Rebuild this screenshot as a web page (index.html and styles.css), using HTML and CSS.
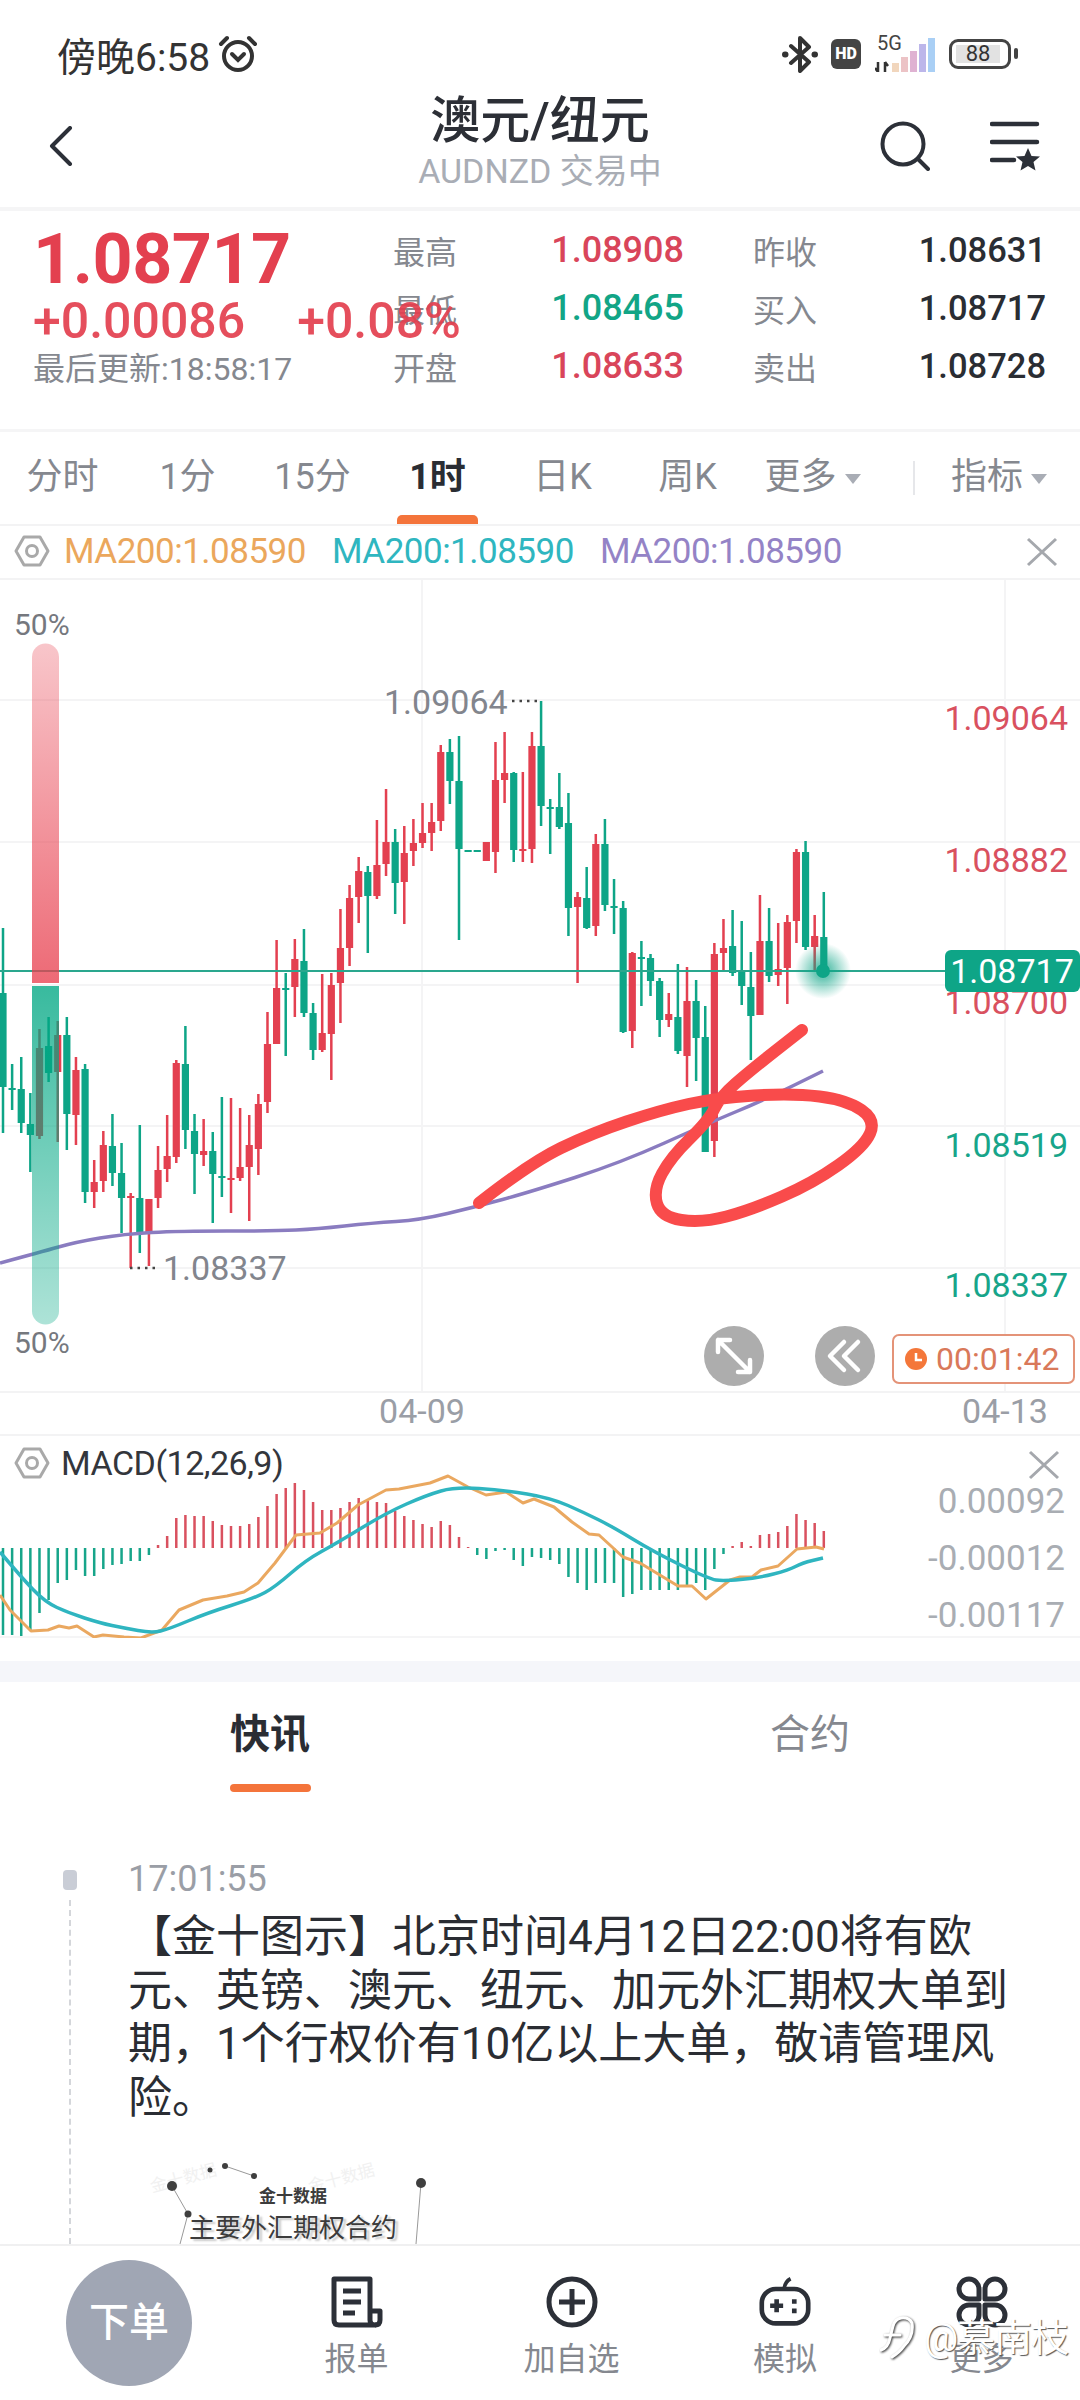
FILE: index.html
```html
<!DOCTYPE html>
<html lang="zh-CN">
<head>
    <meta charset="UTF-8">
    <meta name="viewport" content="width=device-width, initial-scale=1.0">
    <title>澳元/纽元</title>
    <link rel="stylesheet" href="styles.css">
</head>
<body>
    <div class="status-bar">
        <div class="status-left">
            <span>傍晚6:58</span>
            <svg class="alarm" viewBox="0 0 40 38" fill="none" stroke="#333" stroke-width="4" stroke-linecap="round">
                <circle cx="20" cy="21" r="14"/>
                <path d="M3 9 L9 3 M37 9 L31 3"/>
                <path d="M14 19 L20 25 L26 19"/>
            </svg>
        </div>
        <div class="status-right">
            <svg class="bt" viewBox="0 0 36 38" fill="none" stroke="#333" stroke-width="4" stroke-linecap="round" stroke-linejoin="round">
                <path d="M9 11 L27 27 L18 36 V3 L27 12 L9 28"/>
                <path d="M3 19.5 h.5 M32.5 19.5 h.5" stroke-width="6"/>
            </svg>
            <span class="hd">HD</span>
            <div class="signal">
                <span class="five-g">5G</span>
                <svg class="signal-bars" viewBox="0 0 60 34">
                    <path d="M3 24 L3 34 M0 30 L3 34 M10 34 L10 24 M10 24 L13 28" fill="none" stroke="#333" stroke-width="2.5"/>
                    <rect x="17" y="25" width="7" height="9" fill="#f1d6bd"/>
                    <rect x="26" y="19" width="7" height="15" fill="#ecc3c6"/>
                    <rect x="35" y="13" width="7" height="21" fill="#dfb2d2"/>
                    <rect x="44" y="6" width="7" height="28" fill="#bcb6ea"/>
                    <rect x="53" y="0" width="7" height="34" fill="#a9cff5"/>
                </svg>
            </div>
            <div class="battery"><span class="battery-level">88</span></div>
            <span class="battery-nub"></span>
        </div>
    </div>

    <div class="nav">
        <svg class="back" viewBox="0 0 24 40" fill="none" stroke="#2c3038" stroke-width="4" stroke-linecap="round" stroke-linejoin="round">
            <path d="M21 2 L3 20 L21 38"/>
        </svg>
        <div class="nav-title">
            <h1>澳元/纽元</h1>
            <p>AUDNZD 交易中</p>
        </div>
        <div class="nav-actions">
            <svg class="search" viewBox="0 0 50 50" fill="none" stroke="#2c3038" stroke-width="4" stroke-linecap="round">
                <circle cx="23" cy="23" r="20.5"/>
                <path d="M38 38 L48 48"/>
            </svg>
            <svg class="watch" viewBox="0 0 50 50" fill="none" stroke="#2c3038" stroke-width="4.5" stroke-linecap="round">
                <path d="M2 3 H47 M2 21 H47 M2 39 H24"/>
                <path d="M38 27 L41.5 35 L50 35.5 L43.5 41 L45.5 49.5 L38 45 L30.5 49.5 L32.5 41 L26 35.5 L34.5 35 Z" fill="#2c3038" stroke="none"/>
            </svg>
        </div>
    </div>

    <div class="divider"></div>

    <div class="quote">
        <div class="quote-main">
            <div class="price">1.08717</div>
            <div class="change"><span>+0.00086</span><span>+0.08%</span></div>
            <div class="updated">最后更新:18:58:17</div>
        </div>
        <div class="stats">
            <span class="stat-label">最高</span><span class="stat-value up">1.08908</span>
            <span class="stat-label alt">昨收</span><span class="stat-value dark">1.08631</span>
            <span class="stat-label">最低</span><span class="stat-value down">1.08465</span>
            <span class="stat-label alt">买入</span><span class="stat-value dark">1.08717</span>
            <span class="stat-label">开盘</span><span class="stat-value up">1.08633</span>
            <span class="stat-label alt">卖出</span><span class="stat-value dark">1.08728</span>
        </div>
    </div>

    <div class="divider thin"></div>

    <div class="period-tabs">
        <div class="period">分时</div>
        <div class="period">1分</div>
        <div class="period">15分</div>
        <div class="period active">1时</div>
        <div class="period">日K</div>
        <div class="period">周K</div>
        <div class="period">更多<i class="caret"></i></div>
        <span class="period-sep"></span>
        <div class="period indicator">指标<i class="caret"></i></div>
    </div>

    <div class="ma-legend">
        <svg class="hex" viewBox="0 0 36 32" fill="none" stroke="#a9a9a9" stroke-width="3" stroke-linejoin="round">
            <path d="M10 2 H26 L34 16 L26 30 H10 L2 16 Z"/>
            <circle cx="18" cy="16" r="5.5"/>
        </svg>
        <span class="ma orange">MA200:1.08590</span>
        <span class="ma teal">MA200:1.08590</span>
        <span class="ma purple">MA200:1.08590</span>
        <svg class="close" viewBox="0 0 32 30" fill="none" stroke="#a5a8ad" stroke-width="3">
            <path d="M2 2 L30 28 M30 2 L2 28"/>
        </svg>
    </div>

    <div class="chart"><svg id="kline" viewBox="0 580 1080 811"></svg></div>

    <div class="x-axis">
        <span class="x-label first">04-09</span>
        <span class="x-label second">04-13</span>
    </div>

    <div class="macd">
        <svg id="macd" class="macd-plot" viewBox="0 1436 1080 202"></svg>
        <div class="macd-legend">
            <svg class="hex" viewBox="0 0 36 32" fill="none" stroke="#a9a9a9" stroke-width="3" stroke-linejoin="round">
                <path d="M10 2 H26 L34 16 L26 30 H10 L2 16 Z"/>
                <circle cx="18" cy="16" r="5.5"/>
            </svg>
            <span>MACD(12,26,9)</span>
            <svg class="close" viewBox="0 0 32 30" fill="none" stroke="#a5a8ad" stroke-width="3">
                <path d="M2 2 L30 28 M30 2 L2 28"/>
            </svg>
        </div>
    </div>

    <div class="band"></div>

    <div class="news-tabs">
        <div class="news-tab active">快讯</div>
        <div class="news-tab">合约</div>
    </div>

    <div class="news">
        <span class="news-mark"></span>
        <span class="news-line"></span>
        <div class="news-time">17:01:55</div>
        <p class="news-text">【金十图示】北京时间4月12日22:00将有欧元、英镑、澳元、纽元、加元外汇期权大单到期，1个行权价有10亿以上大单，敬请管理风险。</p>
        <div class="thumb">
            <span class="thumb-faint left">金十数据</span>
            <span class="thumb-faint right">金十数据</span>
            <svg class="thumb-art" viewBox="0 0 310 94" fill="none" stroke="#999" stroke-width="1">
                <path d="M37 36 L53 64 L45 94 M90 16 L119 26 M286 33 L281 94"/>
                <g fill="#3f3f3f" stroke="none">
                    <circle cx="37" cy="36" r="5"/>
                    <circle cx="75" cy="20" r="2.5"/>
                    <circle cx="90" cy="16" r="3"/>
                    <circle cx="119" cy="26" r="3"/>
                    <circle cx="286" cy="33" r="5"/>
                    <circle cx="53" cy="64" r="3.5"/>
                </g>
            </svg>
            <div class="thumb-brand">金十数据</div>
            <div class="thumb-title">主要外汇期权合约</div>
        </div>
    </div>

    <div class="bottom-bar">
        <div class="order-btn">下单</div>
        <div class="bar-item">
            <svg class="bar-icon" viewBox="0 0 52 52" fill="none" stroke="#2c3038" stroke-width="5" stroke-linejoin="round">
                <path d="M3 3 H39 V44 Q39 49 44 49 H8 Q3 49 3 44 Z"/>
                <path d="M39 35 H49 V44 Q49 49 44 49"/>
                <path d="M12 15 H30 M12 26 H30 M12 37 H24"/>
            </svg>
            <span>报单</span>
        </div>
        <div class="bar-item">
            <svg class="bar-icon" viewBox="0 0 52 52" fill="none" stroke="#2c3038" stroke-width="5">
                <circle cx="26" cy="26" r="23"/>
                <path d="M26 13 V39 M13 26 H39"/>
            </svg>
            <span>加自选</span>
        </div>
        <div class="bar-item">
            <svg class="bar-icon" viewBox="0 0 56 52" fill="none" stroke="#2c3038" stroke-width="5">
                <rect x="3" y="12" width="50" height="37" rx="15"/>
                <path d="M27 12 Q28 4 34 1" stroke-width="4"/>
                <path d="M19 23 V37 M12 30 H26"/>
                <path d="M38 23 V28 M38 33 V38" stroke-width="5"/>
            </svg>
            <span>模拟</span>
        </div>
        <div class="bar-item last">
            <svg class="bar-icon" viewBox="0 0 52 52" fill="none" stroke="#2c3038" stroke-width="5" stroke-linejoin="round">
                <path d="M3 13 A10 10 0 0 1 23 13 V23 H13 A10 10 0 0 1 3 13 Z"/>
                <path d="M29 13 A10 10 0 0 1 49 13 A10 10 0 0 1 39 23 H29 Z"/>
                <path d="M3 39 A10 10 0 0 1 13 29 H23 V39 A10 10 0 0 1 3 39 Z"/>
                <path d="M29 29 H39 A10 10 0 0 1 49 39 A10 10 0 0 1 29 39 Z"/>
            </svg>
            <span>更多</span>
        </div>
    </div>

    <div class="watermark">
        <svg class="wm-logo" viewBox="0 0 36 44" fill="none" stroke="#fff" stroke-width="3" stroke-linecap="round">
            <path d="M1 34 Q8 32 10 22 L13 10 Q15 3 21 2 Q29 1 32 7 Q34 20 24 30 Q20 36 12 41"/>
            <path d="M5 19 H20"/>
        </svg>
        <span>@慕南枝</span>
    </div>

    <script src="chart.js"></script>
</body>
</html>
```

FILE: styles.css
```css
* {
    margin: 0;
    padding: 0;
    box-sizing: border-box;
}

body {
    position: relative;
    width: 1080px;
    height: 2400px;
    overflow: hidden;
    display: flex;
    flex-direction: column;
    background: white;
    color: #2a2d33;
    font-family: Roboto, "Noto Sans CJK SC", sans-serif;
}

/* status bar */
.status-bar {
    height: 85px;
    flex: none;
    padding: 22px 62px 0 57px;
    display: flex;
    justify-content: space-between;
    align-items: center;
}

.status-left {
    display: flex;
    align-items: center;
    gap: 8px;
    font-size: 39px;
    color: #333;
}

.alarm {
    width: 40px;
    height: 38px;
}

.status-right {
    display: flex;
    align-items: center;
}

.bt {
    width: 36px;
    height: 38px;
}

.hd {
    width: 30px;
    height: 30px;
    margin-left: 13px;
    border-radius: 6px;
    background: #444;
    color: white;
    font-size: 16px;
    font-weight: 900;
    line-height: 30px;
    text-align: center;
}

.signal {
    position: relative;
    width: 60px;
    height: 36px;
    margin-left: 14px;
}

.five-g {
    position: absolute;
    left: 2px;
    top: -3px;
    font-size: 20px;
    line-height: 20px;
    color: #444;
}

.signal-bars {
    position: absolute;
    left: 0;
    bottom: 0;
    width: 60px;
    height: 34px;
}

.battery {
    width: 62px;
    height: 30px;
    margin-left: 14px;
    padding: 3px 8px 3px 4px;
    border: 3px solid #444;
    border-radius: 9px;
    display: flex;
}

.battery-level {
    flex: 1;
    background: #e2e2e2;
    color: #333;
    font-size: 22px;
    line-height: 18px;
    text-align: center;
}

.battery-nub {
    width: 4px;
    height: 11px;
    margin-left: 3px;
    border-radius: 2px;
    background: #444;
}

/* title bar */
.nav {
    height: 122px;
    flex: none;
    padding: 0 40px;
    display: grid;
    grid-template-columns: 1fr auto 1fr;
    align-items: center;
}

.back {
    width: 24px;
    height: 40px;
    margin-left: 9px;
}

.nav-title {
    align-self: start;
    padding-top: 9px;
    text-align: center;
}

.nav-title h1 {
    font-size: 50px;
    font-weight: 500;
    line-height: 54px;
    color: #2c2f36;
}

.nav-title p {
    font-size: 34px;
    line-height: 46px;
    color: #a9adb5;
}

.nav-actions {
    display: flex;
    justify-content: flex-end;
    gap: 60px;
}

.search {
    width: 50px;
    height: 50px;
}

.watch {
    width: 50px;
    height: 50px;
}

.divider {
    height: 4px;
    flex: none;
    background: #f5f5f6;
}

.divider.thin {
    height: 3px;
}

/* quote */
.quote {
    height: 218px;
    flex: none;
    padding: 10px 0 0 33px;
    display: flex;
}

.quote-main {
    width: 360px;
    flex: none;
    padding-top: 2px;
    white-space: nowrap;
}

.price {
    height: 72px;
    font-size: 70px;
    font-weight: 700;
    line-height: 72px;
    letter-spacing: -0.5px;
    color: #e3404f;
}

.change {
    height: 52px;
    display: flex;
    gap: 52px;
    font-size: 50px;
    font-weight: 500;
    line-height: 52px;
    color: #e3404f;
    opacity: 0.92;
}

.updated {
    height: 44px;
    font-size: 32px;
    line-height: 44px;
    color: #85888f;
}

.stats {
    display: grid;
    grid-template-columns: 65px 226px 133px 229px;
    grid-auto-rows: 58px;
    align-items: center;
}

.stat-label {
    font-size: 32px;
    color: #85888f;
}

.stat-label.alt {
    text-align: right;
}

.stat-value {
    font-size: 36px;
    font-weight: 500;
    text-align: right;
    color: #2a2d33;
}

.stat-value.dark {
    font-size: 34.5px;
}

.up {
    color: #d9455a;
}

.down {
    color: #12a586;
}

/* periods */
.period-tabs {
    height: 94px;
    flex: none;
    display: flex;
    border-bottom: 2px solid #f3f3f4;
}

.period {
    position: relative;
    width: 125px;
    font-size: 36px;
    line-height: 90px;
    text-align: center;
    color: #85888f;
}

.period.active {
    font-weight: 700;
    color: #2a2d33;
}

.period.active::after {
    content: "";
    position: absolute;
    left: 22px;
    bottom: 0;
    width: 81px;
    height: 9px;
    border-radius: 5px 5px 0 0;
    background: #f4743b;
}

.caret {
    display: inline-block;
    margin-left: 8px;
    vertical-align: middle;
    border: 8px solid transparent;
    border-top: 10px solid #a9adb5;
    border-bottom: 0;
}

.period-sep {
    width: 2px;
    height: 34px;
    margin: 29px 0 0 38px;
    background: #e6e7ea;
}

.period.indicator {
    margin-left: 36px;
    text-align: left;
    white-space: nowrap;
}

/* indicator legends */
.ma-legend {
    position: relative;
    height: 54px;
    flex: none;
    padding: 0 0 2px 14px;
    display: flex;
    align-items: center;
    border-bottom: 2px solid #f3f3f4;
    font-size: 35px;
    letter-spacing: -0.5px;
}

.hex {
    width: 36px;
    height: 32px;
    flex: none;
}

.ma {
    margin-right: 26px;
}

.ma.orange {
    margin-left: 14px;
    color: #eba75c;
}

.ma.teal {
    color: #2fb6c0;
}

.ma.purple {
    color: #9483c6;
}

.close {
    position: absolute;
    right: 22px;
    top: 11px;
    width: 32px;
    height: 30px;
}

/* kline */
.chart {
    height: 811px;
    flex: none;
}

.chart svg {
    display: block;
    width: 1080px;
    height: 811px;
}

.grid-line {
    stroke: #f4f4f5;
    stroke-width: 2;
}

.last-line {
    stroke: #2aa78e;
    stroke-width: 2;
}

.tick {
    font-size: 34px;
    text-anchor: end;
}

.tick.up {
    fill: #d9515f;
}

.tick.down {
    fill: #17a58a;
}

.extreme {
    font-size: 34px;
    fill: #82858d;
}

.extreme-dots {
    stroke: #444;
    stroke-width: 2.5;
    stroke-dasharray: 2.5 5;
}

.ratio {
    font-size: 30px;
    fill: #75787e;
}

.last-tag {
    fill: #0ea587;
}

.last-text {
    font-size: 34px;
    fill: white;
    text-anchor: middle;
}

.ma-line {
    fill: none;
    stroke: #8a7cc0;
    stroke-width: 3.5;
    stroke-linejoin: round;
}

.scribble {
    fill: none;
    stroke: #f94b4b;
    stroke-width: 12;
    stroke-linecap: round;
    stroke-linejoin: round;
}

.round-btn {
    fill: #adadad;
}

.round-icon {
    fill: none;
    stroke: white;
    stroke-width: 4.5;
    stroke-linecap: round;
    stroke-linejoin: round;
}

.timer-box {
    fill: white;
    stroke: #e49378;
    stroke-width: 2;
}

.timer-text {
    font-size: 32px;
    fill: #d9795a;
}

.timer-dot {
    fill: #f4773a;
}

.timer-hand {
    fill: none;
    stroke: white;
    stroke-width: 2.5;
}

.x-axis {
    position: relative;
    height: 45px;
    flex: none;
    border-top: 2px solid #f3f3f4;
    border-bottom: 2px solid #f3f3f4;
}

.x-label {
    position: absolute;
    top: 0;
    width: 120px;
    font-size: 34px;
    line-height: 37px;
    text-align: center;
    color: #9a9ea6;
}

.x-label.first {
    left: 362px;
}

.x-label.second {
    left: 945px;
}

/* macd */
.macd {
    position: relative;
    height: 202px;
    flex: none;
    border-bottom: 2px solid #f5f5f6;
}

.macd-plot {
    position: absolute;
    left: 0;
    top: 0;
    width: 1080px;
    height: 202px;
}

.macd-legend {
    position: relative;
    padding: 7px 0 0 14px;
    display: flex;
    align-items: center;
    gap: 11px;
    font-size: 34px;
    letter-spacing: -0.5px;
    color: #33363c;
}

.macd-legend .close {
    right: 20px;
    top: 14px;
}

.macd-line {
    fill: none;
    stroke-width: 3;
    stroke-linejoin: round;
}

.macd-line.orange {
    stroke: #eaa860;
}

.macd-line.teal {
    stroke: #2fb5c0;
    stroke-width: 3.5;
}

.macd-tick {
    font-size: 35px;
    fill: #a9adb3;
    text-anchor: end;
}

.band {
    height: 21px;
    flex: none;
    margin-top: 23px;
    background: #f5f6fa;
}

/* news */
.news-tabs {
    height: 110px;
    flex: none;
    display: grid;
    grid-template-columns: 1fr 1fr;
}

.news-tab {
    padding-top: 27px;
    font-size: 40px;
    line-height: 52px;
    text-align: center;
    color: #85888f;
}

.news-tab.active {
    font-weight: 700;
    color: #2a2d33;
}

.news-tab.active::after {
    content: "";
    display: block;
    width: 81px;
    height: 8px;
    margin: 23px auto 0;
    border-radius: 4px;
    background: #f4743b;
}

.news {
    position: relative;
    flex: 1;
    min-height: 0;
    overflow: hidden;
    padding: 67px 72px 0 128px;
}

.news-mark {
    position: absolute;
    left: 63px;
    top: 78px;
    width: 14px;
    height: 20px;
    border-radius: 4px;
    background: #c9cdd6;
}

.news-line {
    position: absolute;
    left: 69px;
    top: 108px;
    bottom: 0;
    border-left: 2px dashed #d4d6da;
}

.news-time {
    font-size: 36px;
    line-height: 40px;
    color: #9a9ea6;
}

.news-text {
    margin-top: 12px;
    font-size: 44px;
    line-height: 53.5px;
    color: #2a2d33;
}

.thumb {
    position: relative;
    width: 310px;
    height: 100px;
    margin: 25px 0 0 7px;
    text-align: center;
}

.thumb-art {
    position: absolute;
    left: 0;
    top: 0;
    width: 310px;
    height: 94px;
}

.thumb-faint {
    position: absolute;
    top: 14px;
    font-size: 17px;
    color: #f1f1f1;
    transform: rotate(-15deg);
}

.thumb-faint.left {
    left: 14px;
}

.thumb-faint.right {
    left: 172px;
}

.thumb-brand {
    position: relative;
    padding-top: 34px;
    padding-left: 6px;
    font-size: 17px;
    font-weight: 700;
    line-height: 24px;
    color: #3c3c3c;
}

.thumb-title {
    position: relative;
    padding-left: 6px;
    margin-top: 3px;
    font-size: 26px;
    line-height: 34px;
    color: #3c3c3c;
    text-shadow: 3px 2px 2px #c9c9c9;
    white-space: nowrap;
}

/* bottom bar */
.bottom-bar {
    height: 156px;
    flex: none;
    display: grid;
    grid-template-columns: 249px 215px 215px 212px 1fr;
    border-top: 2px solid #f0f0f1;
}

.order-btn {
    width: 126px;
    height: 126px;
    margin: 14px 0 0 66px;
    border-radius: 50%;
    background: #a0a6b4;
    color: white;
    font-size: 40px;
    font-weight: 500;
    line-height: 126px;
    text-align: center;
}

.bar-item {
    padding-top: 30px;
    display: flex;
    flex-direction: column;
    align-items: center;
    font-size: 32px;
    line-height: 44px;
    color: #85888f;
}

.bar-item.last {
    padding-right: 8px;
}

.bar-icon {
    width: 52px;
    height: 52px;
    margin-bottom: 9px;
}

.watermark {
    position: absolute;
    left: 880px;
    top: 2316px;
    display: flex;
    align-items: center;
    gap: 8px;
    font-size: 38px;
    line-height: 44px;
    letter-spacing: -1px;
    color: white;
    text-shadow: 1px 1px 1px #555;
}

.wm-logo {
    width: 36px;
    height: 44px;
    filter: drop-shadow(1px 1px 1px #333);
}
```

FILE: chart.js
```js
// candles: [colour, high, body top, body bottom, low], y in page pixels
const candles = [
    ['g',928,993,1087,1133],['g',1064,1088,1090,1110],['g',1057,1089,1123,1133],['g',1093,1124,1135,1172],
    ['r',1029,1048,1136,1139],['g',1017,1046,1073,1082],['r',1021,1035,1072,1142],['g',1017,1035,1114,1150],
    ['r',1057,1070,1115,1145],['g',1064,1069,1192,1203],['r',1160,1182,1192,1208],['r',1131,1145,1181,1192],
    ['g',1114,1146,1173,1186],['g',1143,1173,1198,1233],['r',1193,1196,1198,1268],['g',1125,1198,1232,1253],
    ['r',1199,1199,1232,1266],['r',1146,1170,1198,1208],['r',1115,1156,1169,1182],['r',1060,1063,1157,1163],
    ['g',1026,1064,1130,1149],['g',1114,1131,1154,1194],['r',1119,1151,1155,1166],['g',1132,1151,1174,1223],
    ['g',1097,1176,1178,1197],['r',1098,1178,1180,1213],['r',1108,1167,1178,1181],['r',1115,1145,1167,1221],
    ['r',1094,1104,1149,1175],['r',1012,1044,1102,1113],['r',940,988,1044,1044],['g',973,988,990,1056],
    ['r',939,959,987,1017],['g',929,961,1013,1017],['g',1003,1013,1050,1060],['r',974,1033,1050,1052],
    ['r',973,985,1034,1080],['r',909,948,983,1023],['r',885,898,948,966],['r',857,871,897,923],
    ['g',866,872,896,953],['r',820,865,896,899],['r',789,842,864,876],['g',829,842,883,914],
    ['r',826,853,882,924],['r',819,843,851,866],['r',803,833,843,848],['r',803,822,833,851],
    ['r',745,752,821,831],['g',739,752,781,804],['g',736,781,849,940],['g',850,850,852,852],
    ['g',850,850,852,852],['r',842,842,861,861],['r',742,780,852,873],['r',732,773,780,803],
    ['g',772,773,850,862],['r',772,849,851,862],['r',732,746,849,863],['g',701,746,806,826],
    ['g',799,807,808,854],['g',773,807,827,829],['g',793,823,908,936],['r',892,897,907,983],
    ['g',867,898,928,929],['r',834,844,926,936],['g',819,844,905,911],['g',879,906,908,934],
    ['g',901,908,1032,1033],['r',952,953,1031,1048],['g',941,957,958,1006],['g',954,958,981,996],
    ['g',978,981,1020,1037],['r',993,1014,1020,1027],['g',964,1017,1051,1054],['r',967,1001,1056,1087],
    ['g',980,1001,1038,1081],['g',1006,1037,1152,1152],['r',943,954,1141,1157],['r',919,948,953,972],
    ['g',910,946,973,976],['g',921,972,986,1005],['g',952,987,1016,1060],['r',895,941,1015,1015],
    ['g',908,941,976,982],['r',923,969,975,986],['r',915,922,968,1004],['r',849,852,921,943],
    ['g',841,852,947,950],['r',915,936,947,972],['g',892,937,972,972]
];

const maLine = [[0,1263],[41,1252],[76,1242],[124,1234],[179,1231],[275,1231],[317,1229],[372,1223],[420,1220],
    [475,1207],[530,1192],[620,1163],[709,1123],[764,1100],[823,1071]];

const scribble = [[479,1203],[530,1163],[592,1133],[661,1110],[716,1098],[792,1093],[847,1100],[876,1120],[864,1147],
    [813,1183],[751,1210],[702,1223],[661,1217],[653,1190],[671,1157],[709,1120],[720,1097],[751,1070],[802,1030]];

// histogram in pixels from the zero line, plus is up
const histogram = [-87,-87,-88,-82,-65,-52,-35,-32,-22,-28,-28,-21,-17,-16,-13,-13,-7,
    3,12,30,33,32,32,27,23,22,22,24,31,42,54,60,65,58,46,38,38,40,46,50,47,46,45,37,32,28,24,21,27,23,11,1,
    -7,-11,-3,-2,-12,-18,-9,-10,-12,-16,-29,-35,-42,-35,-35,-35,-49,-46,-42,-42,-42,-42,-42,-37,-35,-42,-21,-6,
    2,6,2,13,14,16,22,34,28,25,17];

const dif = [[0,1595],[10,1610],[31,1631],[48,1630],[59,1626],[69,1628],[77,1626],[94,1637],[103,1635],[124,1637],
    [141,1638],[162,1630],[179,1610],[203,1600],[227,1596],[244,1592],[258,1583],[275,1563],[296,1535],[320,1533],
    [337,1523],[358,1505],[386,1490],[399,1489],[430,1483],[448,1476],[468,1487],[486,1495],[506,1492],[523,1503],
    [534,1499],[554,1507],[572,1522],[589,1534],[599,1535],[623,1557],[640,1563],[678,1586],[692,1586],[706,1599],
    [730,1580],[740,1577],[752,1577],[761,1570],[778,1566],[797,1549],[816,1547],[824,1549]];

const dea = [[0,1552],[21,1577],[45,1602],[69,1613],[100,1623],[124,1628],[152,1633],[169,1629],[207,1613],[255,1598],
    [275,1587],[306,1560],[337,1543],[386,1513],[427,1495],[455,1487],[503,1490],[551,1498],[585,1513],[613,1527],
    [654,1552],[709,1579],[723,1581],[758,1578],[789,1570],[802,1563],[823,1558]];

const RED = '#e34050';
const GREEN = '#0ea587';
const STEP = 9.12;

function slotX(i) {
    return 3 + STEP * i;
}

function polyline(points) {
    return 'M' + points.map(p => p.join(' ')).join(' L');
}

// quadratic curve through the midpoints, keeps hand drawn lines smooth
function smooth(points) {
    let d = `M${points[0][0]} ${points[0][1]}`;
    for (let i = 1; i < points.length - 1; i++) {
        const mx = (points[i][0] + points[i + 1][0]) / 2;
        const my = (points[i][1] + points[i + 1][1]) / 2;
        d += ` Q${points[i][0]} ${points[i][1]} ${mx} ${my}`;
    }
    const last = points[points.length - 1];
    return d + ` L${last[0]} ${last[1]}`;
}

function drawCandles() {
    return candles.map((c, i) => {
        const x = slotX(i);
        const fill = c[0] === 'r' ? RED : GREEN;
        const h = Math.max(c[3] - c[2], 2);
        return `<rect x="${x - 1.25}" y="${c[1]}" width="2.5" height="${c[4] - c[1]}" fill="${fill}"/>` +
            `<rect x="${x - 3.6}" y="${c[2]}" width="7.2" height="${h}" fill="${fill}"/>`;
    }).join('');
}

function drawKline() {
    const gridY = [700, 842, 985, 1126, 1268];
    const grid = gridY.map(y => `<line class="grid-line" x1="0" x2="1080" y1="${y}" y2="${y}"/>`).join('') +
        [422, 1005].map(x => `<line class="grid-line" x1="${x}" x2="${x}" y1="580" y2="1391"/>`).join('');

    const ticks = [
        ['1.09064', 730, 'up'], ['1.08882', 872, 'up'], ['1.08700', 1014, 'up'],
        ['1.08519', 1157, 'down'], ['1.08337', 1297, 'down']
    ].map(t => `<text class="tick ${t[2]}" x="1068" y="${t[1]}">${t[0]}</text>`).join('');

    document.getElementById('kline').innerHTML = `
        <defs>
            <linearGradient id="barUp" x1="0" y1="0" x2="0" y2="1">
                <stop offset="0" stop-color="#e8404f" stop-opacity="0.3"/>
                <stop offset="1" stop-color="#e8404f" stop-opacity="0.78"/>
            </linearGradient>
            <linearGradient id="barDown" x1="0" y1="0" x2="0" y2="1">
                <stop offset="0" stop-color="#00a783" stop-opacity="0.78"/>
                <stop offset="1" stop-color="#00a783" stop-opacity="0.32"/>
            </linearGradient>
            <radialGradient id="pulse">
                <stop offset="0.3" stop-color="#0ea587" stop-opacity="0.6"/>
                <stop offset="1" stop-color="#0ea587" stop-opacity="0"/>
            </radialGradient>
        </defs>
        ${grid}
        ${ticks}
        ${drawCandles()}
        <line class="last-line" x1="0" x2="950" y1="971" y2="971"/>
        <circle cx="823" cy="971" r="28" fill="url(#pulse)"/>
        <circle cx="823" cy="971" r="7" fill="${GREEN}"/>
        <path class="ma-line" d="${smooth(maLine)}"/>
        <path class="scribble" d="${smooth(scribble)}"/>
        <path d="M32 983 V657 A13.5 13.5 0 0 1 59 657 V983 Z" fill="url(#barUp)"/>
        <path d="M32 986 H59 V1311 A13.5 13.5 0 0 1 32 1311 Z" fill="url(#barDown)"/>
        <text class="ratio" x="14" y="635">50%</text>
        <text class="ratio" x="14" y="1353">50%</text>
        <text class="extreme" x="384" y="714">1.09064</text>
        <line class="extreme-dots" x1="512" x2="540" y1="701" y2="701"/>
        <text class="extreme" x="163" y="1280">1.08337</text>
        <line class="extreme-dots" x1="130" x2="158" y1="1268" y2="1268"/>
        <rect class="last-tag" x="945" y="950" width="135" height="42" rx="6"/>
        <text class="last-text" x="1012" y="983">1.08717</text>
        <circle class="round-btn" cx="734" cy="1356" r="30"/>
        <path class="round-icon" d="M718 1340 L750 1372 M718 1352 V1340 H730 M750 1360 V1372 H738"/>
        <circle class="round-btn" cx="845" cy="1356" r="30"/>
        <path class="round-icon" d="M844 1342 L830 1356 L844 1370 M858 1342 L844 1356 L858 1370"/>
        <rect class="timer-box" x="893" y="1335" width="181" height="48" rx="6"/>
        <circle class="timer-dot" cx="916" cy="1359" r="11"/>
        <path class="timer-hand" d="M916 1353 V1360 H922"/>
        <text class="timer-text" x="936" y="1370">00:01:42</text>`;
}

function drawMacd() {
    const zero = 1548;
    const bars = histogram.map((h, i) => {
        const fill = h > 0 ? '#d9515f' : '#17a58a';
        const y = h > 0 ? zero - h : zero;
        return `<rect x="${slotX(i) - 1.25}" y="${y}" width="2.5" height="${Math.abs(h)}" fill="${fill}"/>`;
    }).join('');

    const ticks = [['0.00092', 1513], ['-0.00012', 1570], ['-0.00117', 1627]]
        .map(t => `<text class="macd-tick" x="1065" y="${t[1]}">${t[0]}</text>`).join('');

    document.getElementById('macd').innerHTML = `
        ${bars}
        ${ticks}
        <path class="macd-line orange" d="${polyline(dif)}"/>
        <path class="macd-line teal" d="${smooth(dea)}"/>`;
}

drawKline();
drawMacd();
```
